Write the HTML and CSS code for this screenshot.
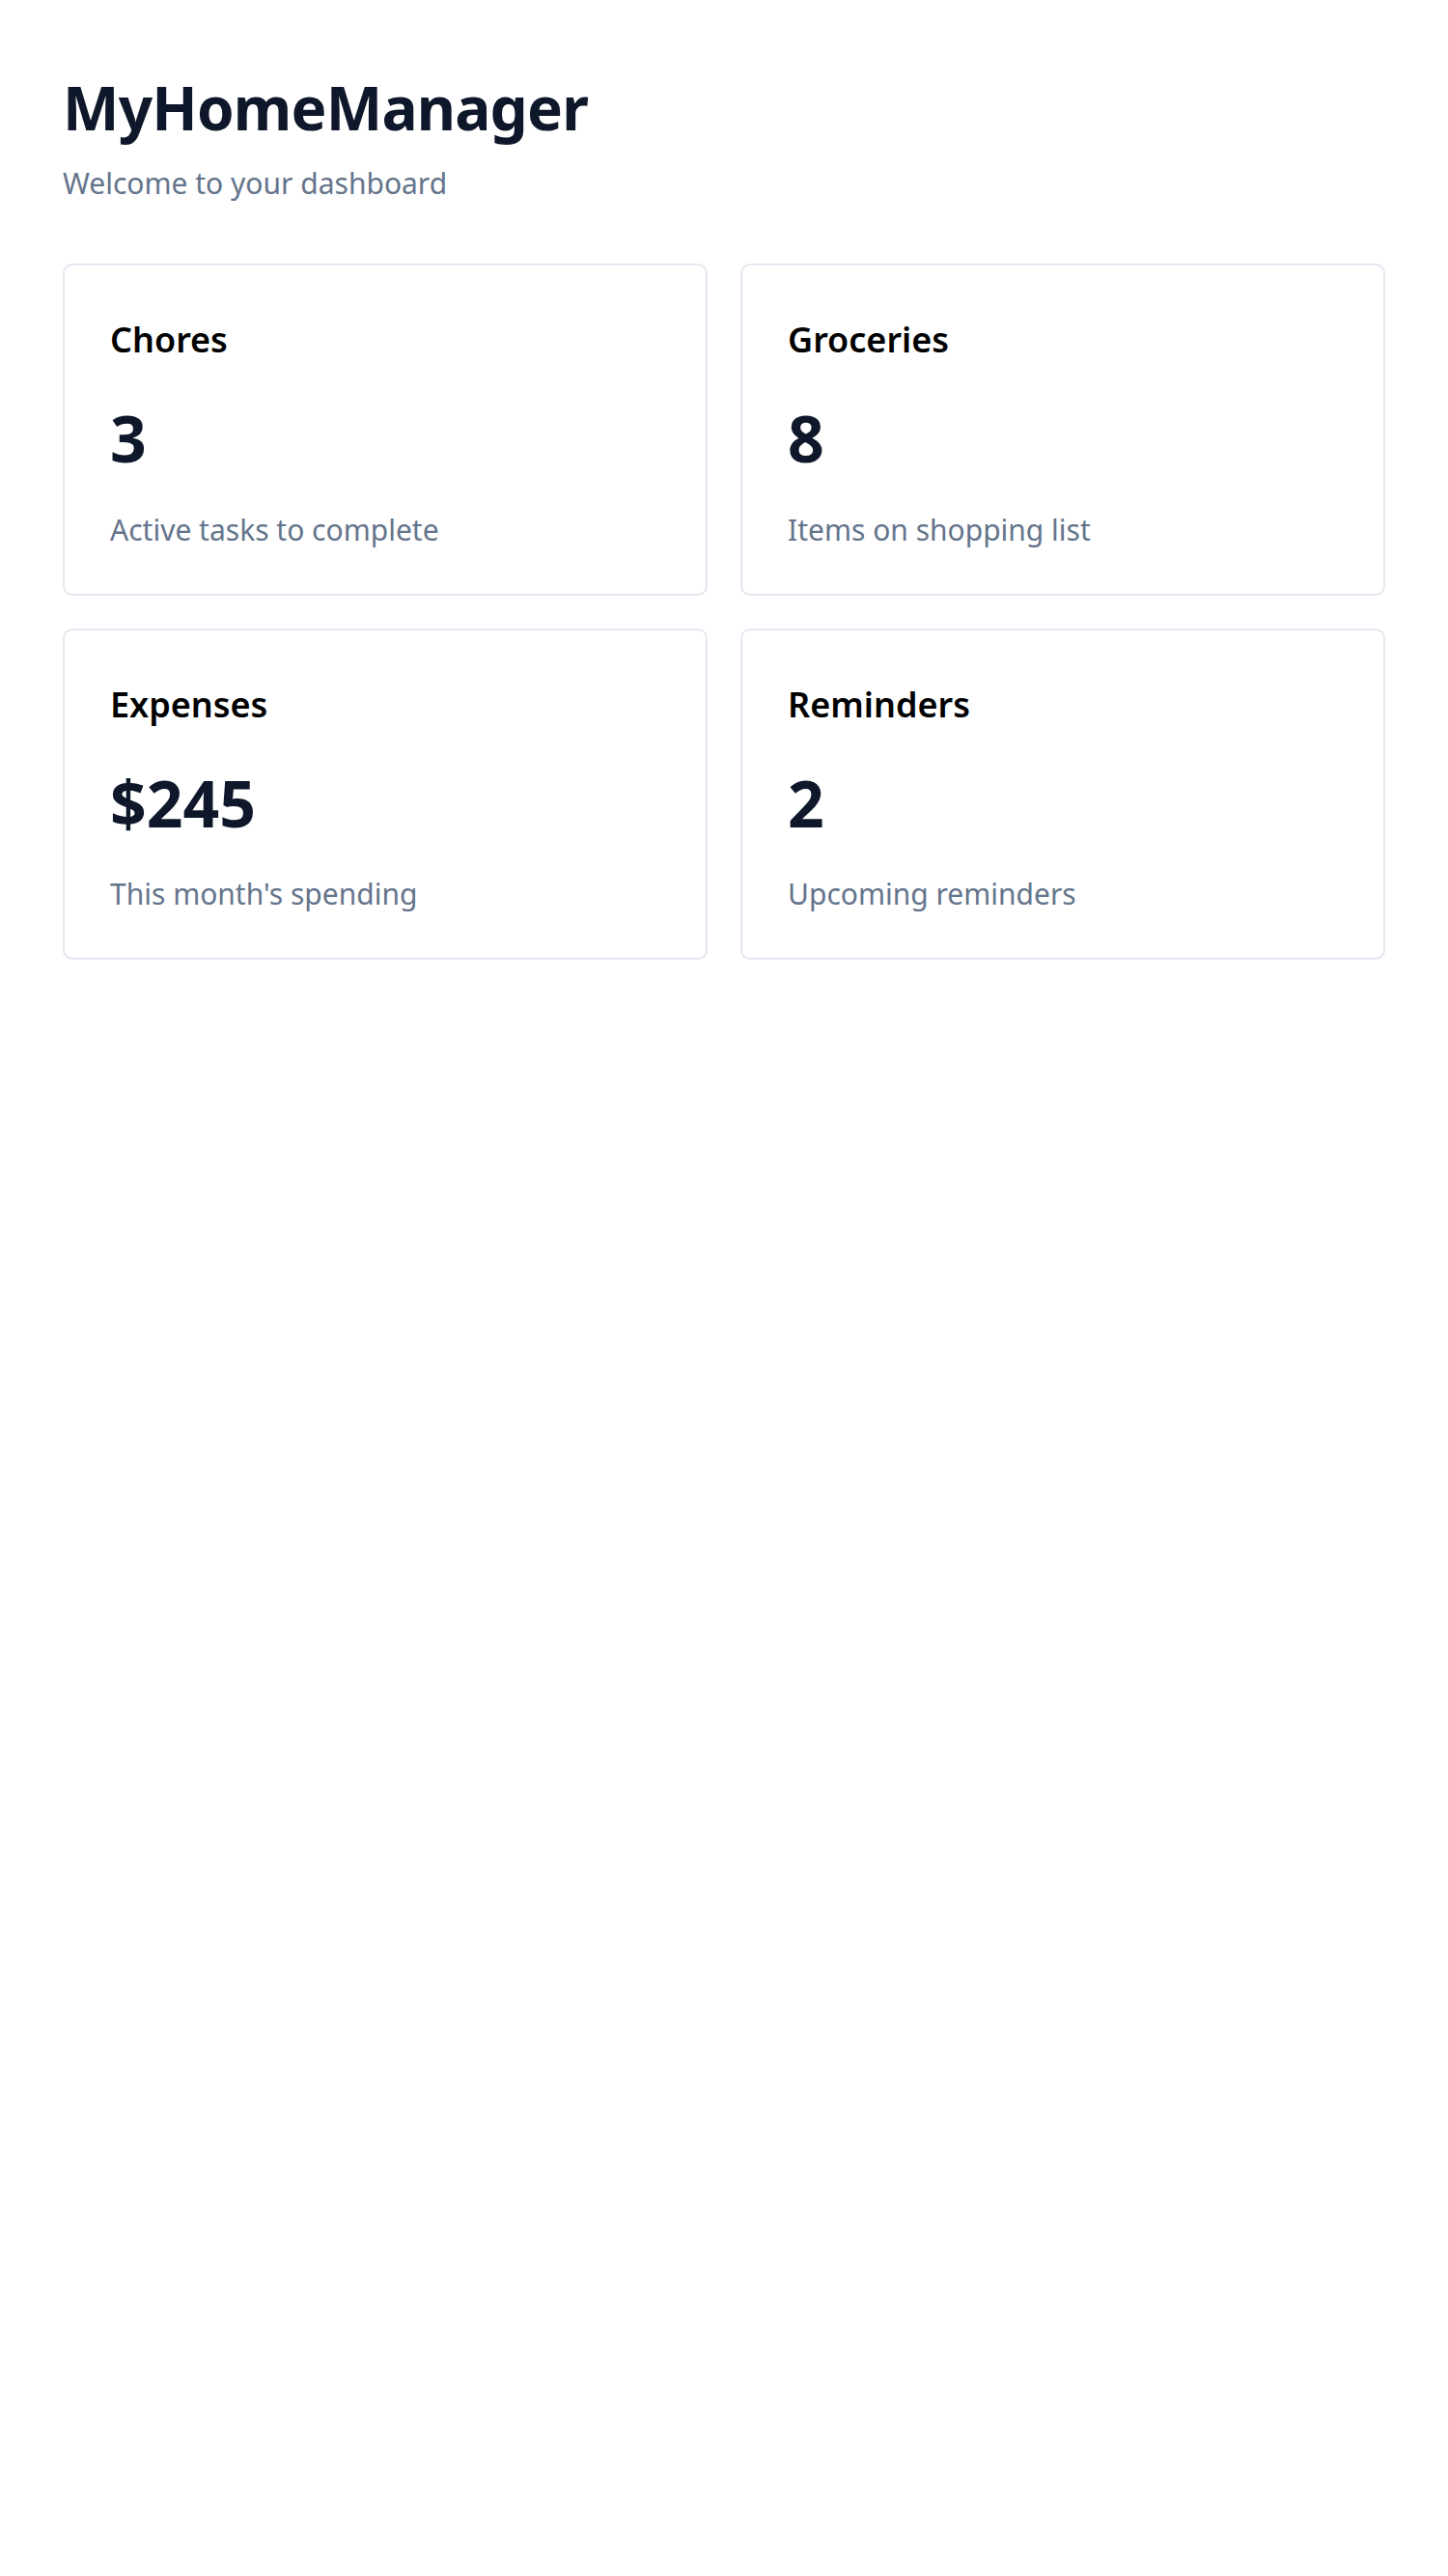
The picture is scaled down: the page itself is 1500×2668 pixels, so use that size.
FILE: index.html
```html
<!DOCTYPE html>
<html lang="en">
<head>
<meta charset="utf-8">
<title>MyHomeManager</title>
<link rel="stylesheet" href="styles.css">
</head>
<body>
<main class="dashboard">
  <header class="header">
    <h1 class="title">MyHomeManager</h1>
    <p class="subtitle">Welcome to your dashboard</p>
  </header>
  <section class="cards">
    <div class="card">
      <h3 class="card-title">Chores</h3>
      <div class="card-value">3</div>
      <p class="card-desc">Active tasks to complete</p>
    </div>
    <div class="card">
      <h3 class="card-title">Groceries</h3>
      <div class="card-value">8</div>
      <p class="card-desc">Items on shopping list</p>
    </div>
    <div class="card">
      <h3 class="card-title">Expenses</h3>
      <div class="card-value">$245</div>
      <p class="card-desc">This month's spending</p>
    </div>
    <div class="card">
      <h3 class="card-title">Reminders</h3>
      <div class="card-value">2</div>
      <p class="card-desc">Upcoming reminders</p>
    </div>
  </section>
</main>
</body>
</html>
```

FILE: styles.css
```css
* { box-sizing: border-box; }

html, body {
  margin: 0;
  padding: 0;
  background: #ffffff;
}

body {
  font-family: "Noto Sans", "Open Sans", "DejaVu Sans", sans-serif;
  color: #0f172a;
}

.dashboard {
  padding: 74px 65px 65px;
}

.header {
  display: flex;
  flex-direction: column;
}

.title {
  margin: 0;
  font-size: 62px;
  font-weight: 700;
  letter-spacing: -0.8px;
  line-height: 1.2;
  color: #0f172a;
}

.subtitle {
  margin: 19px 0 0;
  font-size: 30px;
  line-height: 1.5;
  color: #64748b;
}

.cards {
  margin-top: 61px;
  display: grid;
  grid-template-columns: 1fr 1fr;
  gap: 34px;
}

.card {
  border: 2px solid #e2e8f0;
  border-radius: 10px;
  padding: 56px 47px 44px;
  display: flex;
  flex-direction: column;
  background: #ffffff;
}

.card-title {
  margin: 0;
  font-size: 36px;
  font-weight: 600;
  line-height: 41px;
  color: #000000;
}

.card-value {
  margin-top: 42px;
  font-size: 66px;
  font-weight: 700;
  line-height: 1.2;
  color: #0f172a;
}

.card-desc {
  margin: 32px 0 0;
  font-size: 30px;
  line-height: 1.5;
  color: #64748b;
}
```
